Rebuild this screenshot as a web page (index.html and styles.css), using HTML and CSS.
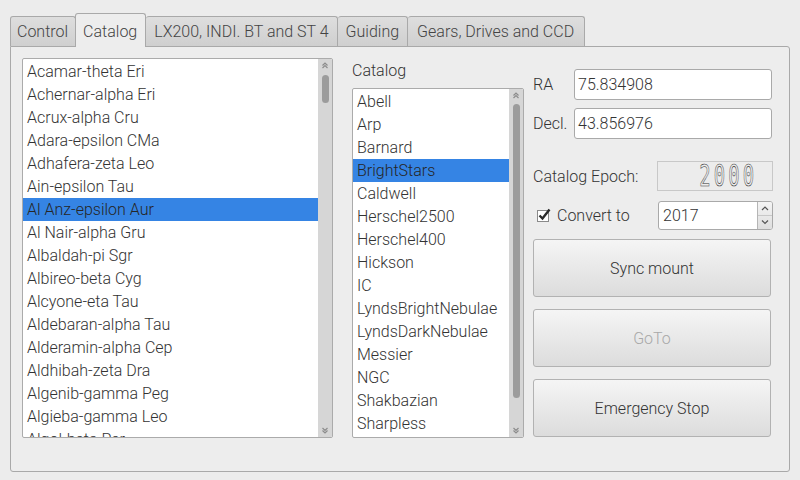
FILE: index.html
```html
<!DOCTYPE html>
<html>
<head>
<meta charset="utf-8">
<link rel="stylesheet" href="styles.css">
</head>
<body>
<div class="window">
  <div class="tabbar">
    <div class="tab first">Control</div>
    <div class="tab active">Catalog</div>
    <div class="tab t3">LX200, INDI. BT and ST 4</div>
    <div class="tab t4">Guiding</div>
    <div class="tab t5">Gears, Drives and CCD</div>
  </div>
  <div class="pane">
    <div class="list stars">
      <div class="items">
        <div class="item">Acamar-theta Eri</div>
        <div class="item">Achernar-alpha Eri</div>
        <div class="item">Acrux-alpha Cru</div>
        <div class="item">Adara-epsilon CMa</div>
        <div class="item">Adhafera-zeta Leo</div>
        <div class="item">Ain-epsilon Tau</div>
        <div class="item sel">Al Anz-epsilon Aur</div>
        <div class="item">Al Nair-alpha Gru</div>
        <div class="item">Albaldah-pi Sgr</div>
        <div class="item">Albireo-beta Cyg</div>
        <div class="item">Alcyone-eta Tau</div>
        <div class="item">Aldebaran-alpha Tau</div>
        <div class="item">Alderamin-alpha Cep</div>
        <div class="item">Aldhibah-zeta Dra</div>
        <div class="item">Algenib-gamma Peg</div>
        <div class="item">Algieba-gamma Leo</div>
        <div class="item">Algol-beta Per</div>
      </div>
      <div class="sbar">
        <svg class="arr" width="14" height="12" viewBox="0 0 14 12"><path d="M4.5 6.5 L7 4 L9.5 6.5 M4.5 9 L7 6.5 L9.5 9" fill="none" stroke="#8c8c8c" stroke-width="1.2"/></svg>
        <div class="track"><div class="thumb small"></div></div>
        <svg class="arr" width="14" height="12" viewBox="0 0 14 12"><path d="M4.5 3 L7 5.5 L9.5 3 M4.5 5.5 L7 8 L9.5 5.5" fill="none" stroke="#8c8c8c" stroke-width="1.2"/></svg>
      </div>
    </div>
    <div class="midcol">
      <div class="label">Catalog</div>
      <div class="list cats">
        <div class="items">
          <div class="item">Abell</div>
          <div class="item">Arp</div>
          <div class="item">Barnard</div>
          <div class="item sel">BrightStars</div>
          <div class="item">Caldwell</div>
          <div class="item">Herschel2500</div>
          <div class="item">Herschel400</div>
          <div class="item">Hickson</div>
          <div class="item">IC</div>
          <div class="item">LyndsBrightNebulae</div>
          <div class="item">LyndsDarkNebulae</div>
          <div class="item">Messier</div>
          <div class="item">NGC</div>
          <div class="item">Shakbazian</div>
          <div class="item">Sharpless</div>
        </div>
        <div class="sbar">
          <svg class="arr" width="14" height="12" viewBox="0 0 14 12"><path d="M4.5 6.5 L7 4 L9.5 6.5 M4.5 9 L7 6.5 L9.5 9" fill="none" stroke="#8c8c8c" stroke-width="1.2"/></svg>
          <div class="track"><div class="thumb big"></div></div>
          <svg class="arr" width="14" height="12" viewBox="0 0 14 12"><path d="M4.5 3 L7 5.5 L9.5 3 M4.5 5.5 L7 8 L9.5 5.5" fill="none" stroke="#8c8c8c" stroke-width="1.2"/></svg>
        </div>
      </div>
    </div>
    <div class="rightcol">
      <div class="row ra">
        <span class="lbl">RA</span>
        <div class="input">75.834908</div>
      </div>
      <div class="row dec">
        <span class="lbl">Decl.</span>
        <div class="input">43.856976</div>
      </div>
      <div class="row epoch">
        <span class="elbl">Catalog Epoch:</span>
        <div class="lcd"><span class="lcdtxt">2000</span></div>
      </div>
      <div class="row conv">
        <span class="check">
          <svg width="15" height="14" viewBox="0 0 15 14">
            <rect x="0.5" y="2.5" width="11" height="11" fill="#fff" stroke="#8a8a8a"/>
            <path d="M2.5 7.5 L5.5 10.5 L12.5 1.5" fill="none" stroke="#2a2a2a" stroke-width="2.4"/>
          </svg>
        </span>
        <span class="clbl">Convert to</span>
        <div class="spin">
          <div class="spinval">2017</div>
          <div class="spinbtns">
            <div class="sb"><svg width="14" height="13" viewBox="0 0 14 13"><path d="M4 8 L7 5 L10 8" fill="none" stroke="#555" stroke-width="1.2"/></svg></div>
            <div class="sb lower"><svg width="14" height="13" viewBox="0 0 14 13"><path d="M4 4.5 L7 7.5 L10 4.5" fill="none" stroke="#555" stroke-width="1.2"/></svg></div>
          </div>
        </div>
      </div>
      <div class="btn">Sync mount</div>
      <div class="btn disabled">GoTo</div>
      <div class="btn">Emergency Stop</div>
    </div>
  </div>
</div>
</body>
</html>
```
FILE: styles.css
```css
html, body {
  margin: 0;
  padding: 0;
  background: #ececec;
}
body {
  font-family: Roboto, "Liberation Sans", sans-serif;
  font-size: 16px;
  font-weight: 300;
  color: #333;
  width: 800px;
  height: 480px;
  overflow: hidden;
}
.window {
  padding: 13px 10px 0 10px;
}
.tabbar {
  display: flex;
  align-items: flex-end;
  height: 33px;
  position: relative;
  z-index: 2;
}
.tab {
  height: 29px;
  line-height: 30px;
  padding: 0 7px;
  border: 1px solid #a9a9a9;
  border-bottom: none;
  border-left: none;
  border-radius: 3px 3px 0 0;
  background: linear-gradient(#dedede, #cfcfcf);
  color: #444;
  box-sizing: content-box;
}
.tab.first {
  border-left: 1px solid #a9a9a9;
  padding: 0 7px 0 6px;
}
.tab.active {
  height: 33px;
  line-height: 35px;
  background: #ededed;
  border-left: 1px solid #a9a9a9;
  margin-left: -1px;
  margin-bottom: -1px;
  padding: 0 8px 0 7px;
}
.tab.t3 { padding: 0 8px 0 8px; }
.tab.t4 { padding: 0 8px 0 8px; }
.tab.t5 { padding: 0 10px 0 9px; }
.pane {
  border: 1px solid #a9a9a9;
  border-radius: 0 3px 3px 3px;
  background: #ededed;
  padding: 11px 0 0 11px;
  box-sizing: content-box;
  display: flex;
  align-items: flex-start;
  height: 413px;
}
.list {
  display: flex;
  background: #fff;
  border: 1px solid #ababab;
  border-radius: 2px;
  overflow: hidden;
}
.stars {
  width: 309px;
  height: 378px;
}
.items {
  flex: 1;
  overflow: hidden;
  padding-top: 1px;
}
.item {
  height: 23px;
  line-height: 23px;
  padding-left: 4px;
  white-space: nowrap;
}
.item.sel {
  background: #3584e4;
  color: #262626;
}
.sbar {
  width: 14px;
  background: #d6d6d6;
  display: flex;
  flex-direction: column;
  align-items: center;
}
.arr {
  display: block;
  flex: none;
}
.track {
  flex: 1;
  width: 100%;
  display: flex;
  justify-content: center;
}
.thumb {
  width: 7px;
  border-radius: 4px;
  background: #9c9c9c;
}
.thumb.small {
  height: 28px;
  margin-top: 4px;
}
.thumb.big {
  height: 294px;
  margin-top: 3px;
}
.midcol {
  margin-left: 19px;
  width: 172px;
  display: flex;
  flex-direction: column;
}
.label {
  height: 30px;
  line-height: 26px;
}
.cats {
  width: 170px;
  height: 348px;
}
.rightcol {
  margin-left: 9px;
  width: 240px;
  display: flex;
  flex-direction: column;
}
.row {
  display: flex;
  align-items: center;
}
.row.ra {
  margin-top: 11px;
  height: 31px;
}
.row.dec {
  margin-top: 8px;
  height: 31px;
}
.lbl {
  width: 41px;
}
.input {
  flex: 1;
  height: 29px;
  line-height: 30px;
  background: #fff;
  border: 1px solid #a9a9a9;
  border-radius: 3px;
  padding-left: 3px;
  margin-right: 1px;
}
.row.epoch {
  margin-top: 22px;
  height: 30px;
}
.elbl {
  width: 124px;
}
.lcd {
  width: 94px;
  height: 28px;
  border: 1px solid #c8c8c8;
  background: #ececec;
  display: flex;
  justify-content: flex-end;
  align-items: center;
  padding-right: 20px;
  box-sizing: content-box;
}
.lcdtxt {
  font-family: "DejaVu Sans Mono", monospace;
  font-size: 30px;
  font-weight: 400;
  line-height: 1;
  letter-spacing: 5px;
  margin-right: -5px;
  color: #ececec;
  -webkit-text-stroke: 0.6px #333;
  display: inline-block;
  transform: scaleX(0.63);
  transform-origin: right center;
}
.row.conv {
  margin-top: 9px;
  height: 30px;
}
.check {
  margin-left: 4px;
  width: 20px;
  height: 14px;
  display: flex;
}
.clbl {
  width: 101px;
}
.spin {
  display: flex;
  width: 113px;
  height: 27px;
  background: #fff;
  border: 1px solid #a9a9a9;
  border-radius: 3px;
  overflow: hidden;
}
.spinval {
  flex: 1;
  line-height: 28px;
  padding-left: 4px;
}
.spinbtns {
  width: 14px;
  border-left: 1px solid #b5b5b5;
  background: linear-gradient(#f4f4f4, #dedede);
  display: flex;
  flex-direction: column;
}
.sb {
  height: 13px;
}
.sb svg {
  display: block;
}
.sb.lower {
  border-top: 1px solid #c8c8c8;
}
.btn {
  margin-top: 9px;
  height: 56px;
  width: 236px;
  border: 1px solid #b2b2b2;
  border-radius: 3px;
  background: linear-gradient(#f5f5f5, #dcdcdc);
  display: flex;
  align-items: center;
  justify-content: center;
  color: #333;
}
.btn + .btn {
  margin-top: 12px;
}
.btn.disabled {
  color: #a8a8a8;
}
```
